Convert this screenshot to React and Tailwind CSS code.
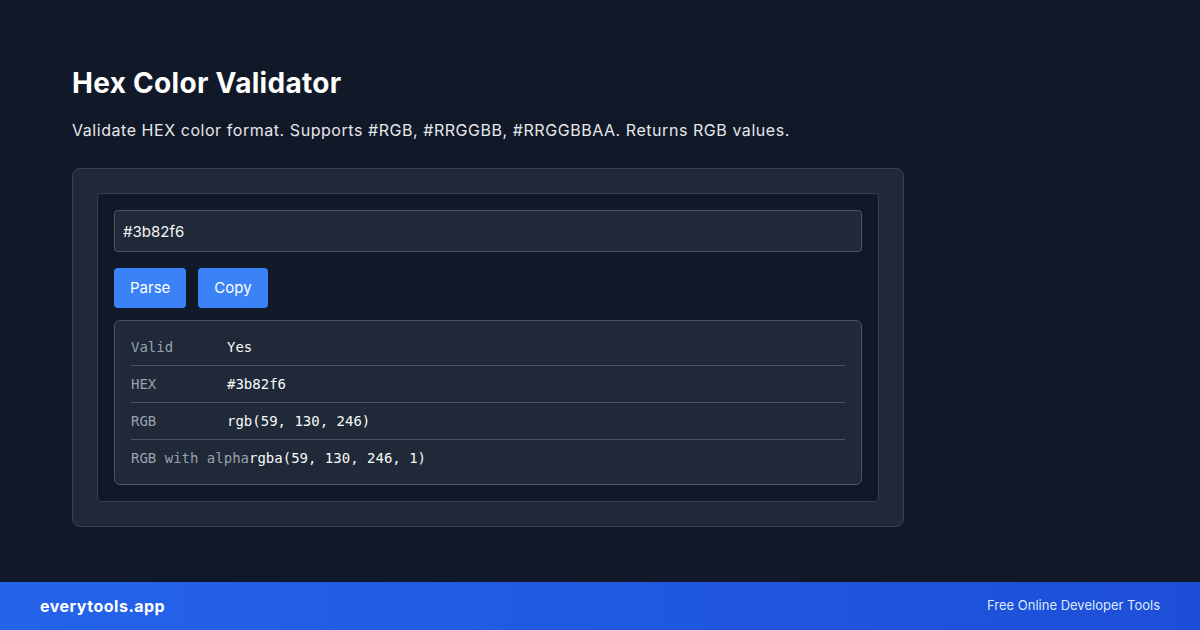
import { useState } from 'react';

const font = { fontFamily: 'Inter, "Noto Sans", sans-serif' };

function parseHex(v) {
  const s = v.trim().replace(/^#/, '');
  if (!/^([0-9a-f]{3}|[0-9a-f]{6}|[0-9a-f]{8})$/i.test(s)) return null;
  const full = s.length === 3 ? s.split('').map(c => c + c).join('') : s;
  const r = parseInt(full.slice(0, 2), 16);
  const g = parseInt(full.slice(2, 4), 16);
  const b = parseInt(full.slice(4, 6), 16);
  const a = full.length === 8 ? +(parseInt(full.slice(6, 8), 16) / 255).toFixed(2) : 1;
  return { hex: '#' + full.toLowerCase(), r, g, b, a };
}

export default function App() {
  const [value, setValue] = useState('#3b82f6');
  const [parsed, setParsed] = useState(parseHex('#3b82f6'));

  const rows = parsed
    ? [
        ['Valid', 'Yes'],
        ['HEX', parsed.hex],
        ['RGB', `rgb(${parsed.r}, ${parsed.g}, ${parsed.b})`],
        ['RGB with alpha', `rgba(${parsed.r}, ${parsed.g}, ${parsed.b}, ${parsed.a})`],
      ]
    : [['Valid', 'No']];

  return (
    <div className="flex flex-col h-[630px] bg-[#111827] text-white" style={font}>
      <main className="flex-1 px-[72px] pt-[66px]">
        <h1 className="text-[28px] leading-[34px] font-bold tracking-[0.3px] text-white">Hex Color Validator</h1>
        <p className="mt-[18px] text-base leading-6 tracking-[0.55px] text-gray-200">
          Validate HEX color format. Supports #RGB, #RRGGBB, #RRGGBBAA. Returns RGB values.
        </p>

        {/* Tool card */}
        <div className="mt-[26px] w-[832px] bg-[#1f2937] border border-[#374151] rounded-lg p-6">
          <div className="bg-[#111827] border border-[#374151] rounded-sm p-4">
            <input
              value={value}
              onChange={e => setValue(e.target.value)}
              className="w-full h-[42px] px-2 bg-[#1f2937] border border-[#4b5563] rounded text-[15px] text-gray-100 outline-none"
              style={font}
            />
            <div className="flex gap-3 mt-4">
              <button
                onClick={() => setParsed(parseHex(value))}
                className="h-10 px-4 bg-[#3b82f6] rounded text-[15px] text-white"
              >
                Parse
              </button>
              <button
                onClick={() => navigator.clipboard?.writeText(value)}
                className="h-10 px-4 bg-[#3b82f6] rounded text-[15px] text-white"
              >
                Copy
              </button>
            </div>

            {/* Result */}
            <div
              className="mt-3 bg-[#1f2937] border border-[#4b5563] rounded-md px-4 py-2"
              style={{ fontFamily: '"DejaVu Sans Mono", "Liberation Mono", monospace' }}
            >
              {rows.map(([k, v], i) => (
                <div
                  key={k}
                  className={`flex items-center py-2 leading-5 text-[14px] ${i < rows.length - 1 ? 'border-b border-[#4b5563]' : ''}`}
                >
                  <span className="min-w-[96px] text-gray-400">{k}</span>
                  <span className="text-gray-50">{v}</span>
                </div>
              ))}
            </div>
          </div>
        </div>
      </main>

      <footer className="h-12 flex items-center justify-between px-10 bg-gradient-to-r from-[#2563eb] to-[#1d4ed8]">
        <span className="text-base font-bold tracking-[0.5px] text-white">everytools.app</span>
        <span className="text-[13px] text-blue-100">Free Online Developer Tools</span>
      </footer>
    </div>
  );
}
